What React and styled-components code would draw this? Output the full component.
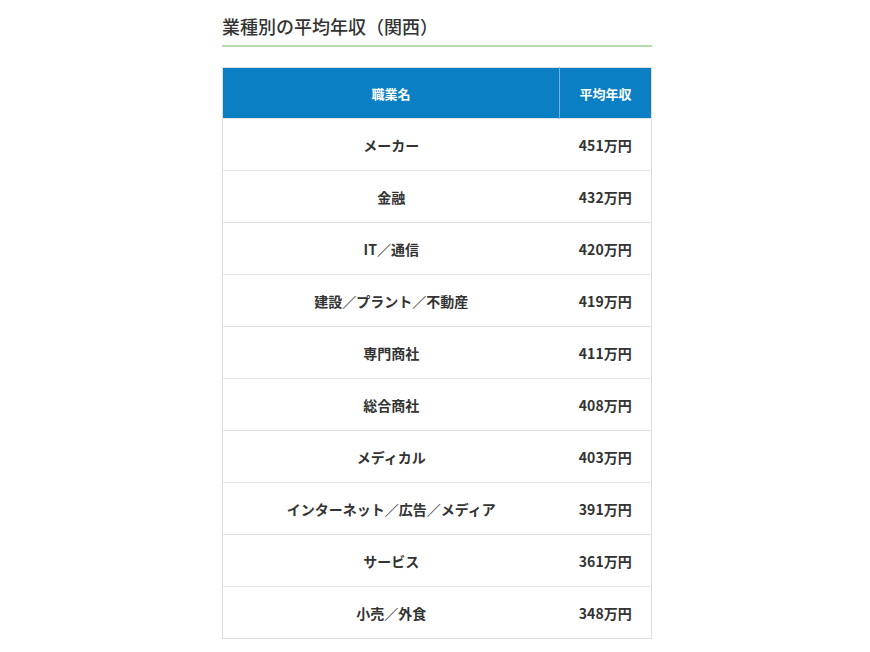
import React from 'react';
import styled, { createGlobalStyle } from 'styled-components';

const Global = createGlobalStyle`
  html, body { margin: 0; padding: 0; background: #fff; }
  body { font-family: 'Noto Sans CJK JP', 'Noto Sans', sans-serif; color: #333; }
`;

const Page = styled.div`
  width: 430px;
  margin: 0 auto;
  padding-top: 13px;
  transform: translateX(2px);
`;

const Title = styled.h2`
  margin: 0;
  padding: 0 0 6px;
  font-size: 18px;
  font-weight: 500;
  line-height: 26px;
  color: #333;
  border-bottom: 2px solid #b6dcae;
`;

const Table = styled.table`
  width: 100%;
  margin-top: 20px;
  border-collapse: collapse;
  border: 1px solid #dedede;
  font-size: 14px;
  font-weight: 700;
`;

const Th = styled.th`
  height: 50px;
  padding: 0;
  background: #0a7fc4;
  color: #fff;
  font-size: 13px;
  font-weight: 700;
  text-align: center;
  width: ${(p) => p.$w || 'auto'};
  & + & { border-left: 1px solid #6fb6e4; }
`;

const Row = styled.tr`
  height: 52px;
  border-top: 1px solid #e3e3e3;
`;

const Td = styled.td`
  padding: 0;
  text-align: center;
  color: #333;
`;

const rows = [
  ['メーカー', '451万円'],
  ['金融', '432万円'],
  ['IT／通信', '420万円'],
  ['建設／プラント／不動産', '419万円'],
  ['専門商社', '411万円'],
  ['総合商社', '408万円'],
  ['メディカル', '403万円'],
  ['インターネット／広告／メディア', '391万円'],
  ['サービス', '361万円'],
  ['小売／外食', '348万円'],
];

export default function App() {
  return (
    <Page>
      <Global />
      <Title>業種別の平均年収（関西）</Title>
      <Table>
        <thead>
          <tr>
            <Th>職業名</Th>
            <Th $w="91px">平均年収</Th>
          </tr>
        </thead>
        <tbody>
          {rows.map(([name, pay]) => (
            <Row key={name}>
              <Td>{name}</Td>
              <Td>{pay}</Td>
            </Row>
          ))}
        </tbody>
      </Table>
    </Page>
  );
}
